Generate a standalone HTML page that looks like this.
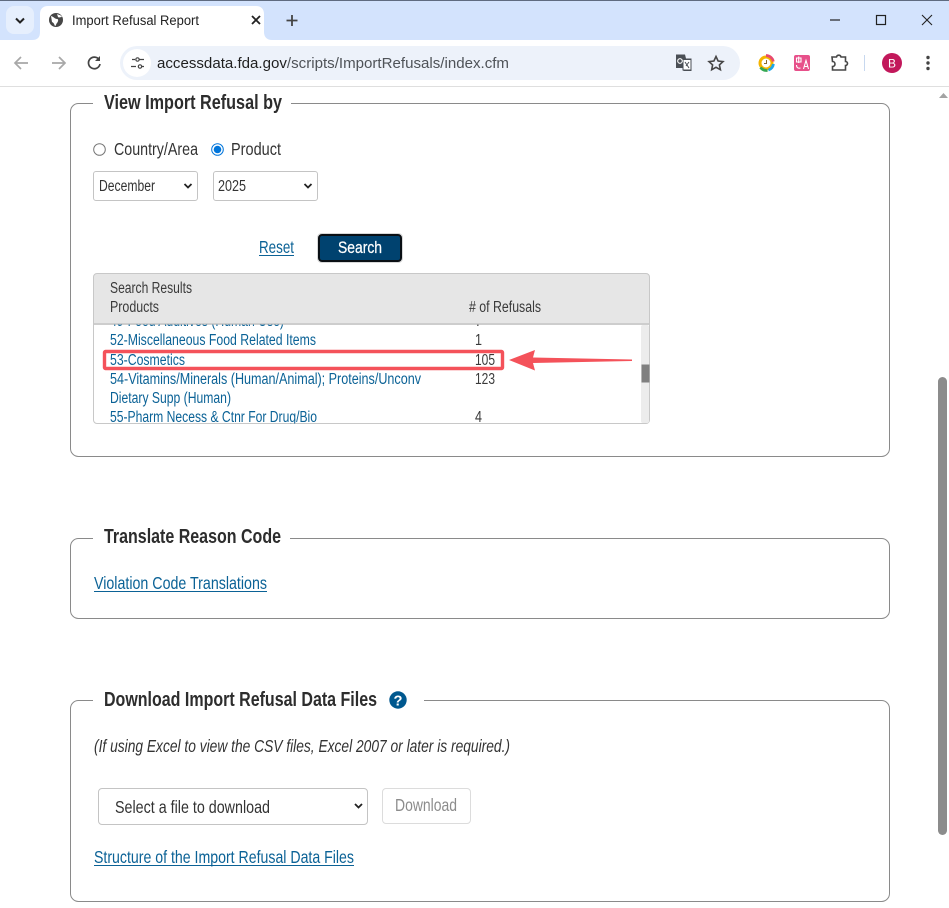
<!DOCTYPE html>
<html lang="en"><head><meta charset="utf-8"><title>Import Refusal Report</title>
<style>
html,body{margin:0;padding:0;background:#fff;width:949px;height:908px;overflow:hidden}
svg{display:block}
text{font-family:"Liberation Sans",sans-serif;fill:#333;font-size:17.500px}
.l{fill:#0b6296}
.h{font-weight:700;font-size:20px;fill:#2d2d2d}
.r{font-size:15.300px;fill:#0b6296}
.n{font-size:15.300px;fill:#3a3a3a}
.f{fill:none;stroke:#8a8a8a;stroke-width:1}
.ic{fill:none;stroke:#474747;stroke-width:1.6}
</style></head><body>
<svg width="949" height="908" viewBox="0 0 949 908" xmlns="http://www.w3.org/2000/svg">
<!-- browser chrome -->
<rect width="949" height="40" fill="#d3e3fd"/>
<rect width="949" height="1" fill="#5f6b80"/>
<rect x="6" y="6" width="28" height="28" rx="8" fill="#e6effd"/>
<path d="M16 18.500l4 4 4-4" fill="none" stroke="#222" stroke-width="2"/>
<path d="M32 40c6 0 8-3 8-8V14c0-5 3-8 8-8h208c5 0 8 3 8 8v18c0 5 3 8 8 8z" fill="#fff"/>
<circle cx="56" cy="20" r="7" fill="#474747"/>
<path d="M51 16c3 1 4 3 6 3s1 3 0 4-1 3-2 3c-1-2-1-3-3-4zM57 14c2 1 4 1 5 3-2 0-3 1-4 0z" fill="#fff"/>
<text x="72" y="25" textLength="127" lengthAdjust="spacingAndGlyphs" style="font-size:13.500px;fill:#222">Import Refusal Report</text>
<path d="M252 16l8 8M260 16l-8 8" stroke="#222" stroke-width="1.800"/>
<path d="M292 15v11M286.500 20.500h11" stroke="#444" stroke-width="1.800"/>
<path d="M830 20h10" stroke="#222" stroke-width="1.200"/>
<rect x="876.500" y="15.500" width="9" height="9" fill="none" stroke="#222" stroke-width="1.200"/>
<path d="M922 15l10 10M932 15l-10 10" stroke="#222" stroke-width="1.100"/>
<rect y="40" width="949" height="46" fill="#fff"/>
<rect y="86" width="949" height="1" fill="#dfdfdf"/>
<!-- toolbar -->
<path d="M28 63H16M21 57l-6 6 6 6" fill="none" stroke="#a8a8a8" stroke-width="1.700"/>
<path d="M52 63h12M59 57l6 6-6 6" fill="none" stroke="#a8a8a8" stroke-width="1.700"/>
<path d="M99 59.500a5.800 5.800 0 1 0 1 4.500" fill="none" stroke="#444" stroke-width="1.700"/>
<path d="M100 56v5h-5z" fill="#444"/>
<rect x="120" y="46" width="620" height="34" rx="17" fill="#edf2fa"/>
<circle cx="137" cy="63" r="14" fill="#fff"/>
<path d="M132 59.500h3M139 59.500h5M131 66.500h5M142 66.500h2" stroke="#444" stroke-width="1.300"/>
<circle cx="137.500" cy="59.500" r="1.700" fill="none" stroke="#444" stroke-width="1.200"/>
<circle cx="140" cy="66.500" r="1.700" fill="none" stroke="#444" stroke-width="1.200"/>
<text x="157" y="68" textLength="352" lengthAdjust="spacingAndGlyphs" style="font-size:15px;fill:#4f5358"><tspan style="fill:#1f1f1f">accessdata.fda.gov</tspan>/scripts/ImportRefusals/index.cfm</text>
<!-- translate icon -->
<path d="M676 54.500h9l1 4h5.500v12.500h-8l-1-3H676z" fill="#4a4f55"/>
<rect x="683" y="59.500" width="8" height="10.500" fill="#fff" stroke="#4a4f55"/>
<path d="M685 62l4 6M689 62l-3 4" stroke="#4a4f55" stroke-width="1" fill="none"/>
<circle cx="680" cy="61" r="2.300" fill="none" stroke="#fff" stroke-width="1.100"/>
<path d="M716 56.500l2.100 4.500 4.900.6-3.600 3.300 1 4.800-4.400-2.400-4.300 2.400.9-4.800-3.600-3.300 4.900-.6z" class="ic"/>
<!-- colour ring -->
<circle cx="766" cy="63" r="6" fill="#fff" stroke="#f4b400" stroke-width="3"/>
<path d="M766 55.500a7.500 7.500 0 0 1 7.300 6" fill="none" stroke="#e84a6f" stroke-width="2.800"/>
<path d="M773.400 64a7.500 7.500 0 0 1-5 6.100" fill="none" stroke="#1ea7e8" stroke-width="2.800"/>
<path d="M767.500 70.400a7.500 7.500 0 0 1-7-3" fill="none" stroke="#34a853" stroke-width="2.800"/>
<path d="M766.500 60v3.500h-2.500" fill="none" stroke="#8a6a30" stroke-width="1"/>
<!-- pink translate -->
<rect x="794" y="55" width="16" height="16" rx="2" fill="#e7508a"/>
<path d="M796.500 58h4.500v4h-4.500zM798.700 56.500v6.500M796.500 65c0 3 2 3.500 4 3M803.500 69l2.500-8.500 2.500 8.500M804.300 66.500h3.400" fill="none" stroke="#fff" stroke-width="1.100"/>
<!-- puzzle -->
<path d="M832 57h4.500a2.300 2.300 0 0 1 4.500 0h4.500v4.500a2 2 0 0 1 0 4V70H832.500v-3.500a2.500 2.500 0 0 0 0-5z" class="ic"/>
<rect x="864" y="55" width="1" height="16" fill="#c7d8ef"/>
<circle cx="892" cy="63" r="10" fill="#c2185b"/>
<text x="888" y="67.500" textLength="8" lengthAdjust="spacingAndGlyphs" style="font-size:12px;fill:#fff">B</text>
<circle cx="928" cy="57.500" r="1.700" fill="#444"/><circle cx="928" cy="63" r="1.700" fill="#444"/><circle cx="928" cy="68.500" r="1.700" fill="#444"/>
<!-- page scrollbar -->
<path d="M939 98l4.500-5 4.500 5z" fill="#a3a3a3"/>
<rect x="938" y="377" width="9" height="458" rx="4.500" fill="#8c8c8c"/>

<!-- fieldset 1 -->
<path class="f" d="M93 103.500H78.500a8 8 0 0 0-8 8v337a8 8 0 0 0 8 8h803a8 8 0 0 0 8-8v-337a8 8 0 0 0-8-8H291"/>
<text class="h" x="104" y="109" textLength="178" lengthAdjust="spacingAndGlyphs">View Import Refusal by</text>
<circle cx="99.500" cy="149.500" r="5.800" fill="#fff" stroke="#767676" stroke-width="1"/>
<text x="114" y="155" textLength="84" lengthAdjust="spacingAndGlyphs">Country/Area</text>
<circle cx="217.500" cy="149.500" r="5.800" fill="#fff" stroke="#0075db" stroke-width="1"/>
<circle cx="217.500" cy="149.500" r="3.800" fill="#0075db"/>
<text x="231" y="155" textLength="50" lengthAdjust="spacingAndGlyphs">Product</text>
<rect x="93.500" y="171.500" width="104" height="29" rx="2.500" fill="#fff" stroke="#c4c4c4"/>
<text x="99" y="191" textLength="56" lengthAdjust="spacingAndGlyphs" style="font-size:15.300px">December</text>
<path d="M184.500 184l3.500 3.500 3.500-3.500" fill="none" stroke="#222" stroke-width="1.800"/>
<rect x="213.500" y="171.500" width="104" height="29" rx="2.500" fill="#fff" stroke="#c4c4c4"/>
<text x="218" y="191" textLength="28" lengthAdjust="spacingAndGlyphs" style="font-size:15.300px">2025</text>
<path d="M304.500 184l3.500 3.500 3.500-3.500" fill="none" stroke="#222" stroke-width="1.800"/>
<text class="l" x="259" y="253" textLength="35" lengthAdjust="spacingAndGlyphs">Reset</text>
<rect x="259" y="255" width="35" height="1" fill="#0b6296"/>
<rect x="317.500" y="233.500" width="85" height="29" rx="4" fill="#fff" stroke="#d8d8d8"/>
<rect x="319" y="235" width="82" height="26" rx="3" fill="#00426f" stroke="#0a0f14" stroke-width="2"/>
<text x="338" y="253" textLength="44" lengthAdjust="spacingAndGlyphs" style="fill:#fff;stroke:#fff;stroke-width:.25px;font-size:17px">Search</text>

<!-- results table -->
<defs><clipPath id="c"><rect x="94" y="324.500" width="555" height="99"/></clipPath></defs>
<path d="M93.500 323V277a3.500 3.500 0 0 1 3.500-3.500h549.500a3.500 3.500 0 0 1 3.500 3.500v46z" fill="#e6e6e6"/>
<rect x="94" y="323" width="556" height="2" fill="#cdcdcd"/>
<rect x="93.500" y="273.500" width="556" height="150" rx="3.500" fill="none" stroke="#c8c8c8"/>
<text class="n" x="110" y="293" textLength="82" lengthAdjust="spacingAndGlyphs">Search Results</text>
<text class="n" x="110" y="312" textLength="49" lengthAdjust="spacingAndGlyphs">Products</text>
<text class="n" x="469" y="312" textLength="72" lengthAdjust="spacingAndGlyphs"># of Refusals</text>
<g clip-path="url(#c)">
<text class="r" x="110" y="326" textLength="174" lengthAdjust="spacingAndGlyphs">49-Food Additives (Human Use)</text>
<text class="n" x="475" y="326" textLength="7" lengthAdjust="spacingAndGlyphs">7</text>
<text class="r" x="110" y="345" textLength="206" lengthAdjust="spacingAndGlyphs">52-Miscellaneous Food Related Items</text>
<text class="n" x="475" y="345" textLength="7" lengthAdjust="spacingAndGlyphs">1</text>
<text class="r" x="110" y="365" textLength="75" lengthAdjust="spacingAndGlyphs">53-Cosmetics</text>
<text class="n" x="475" y="365" textLength="20" lengthAdjust="spacingAndGlyphs">105</text>
<text class="r" x="110" y="384" textLength="311" lengthAdjust="spacingAndGlyphs">54-Vitamins/Minerals (Human/Animal); Proteins/Unconv</text>
<text class="n" x="475" y="384" textLength="20" lengthAdjust="spacingAndGlyphs">123</text>
<text class="r" x="110" y="403" textLength="121" lengthAdjust="spacingAndGlyphs">Dietary Supp (Human)</text>
<text class="r" x="110" y="422" textLength="207" lengthAdjust="spacingAndGlyphs">55-Pharm Necess &amp; Ctnr For Drug/Bio</text>
<text class="n" x="475" y="422" textLength="7" lengthAdjust="spacingAndGlyphs">4</text>
</g>
<rect x="641" y="325" width="8" height="98" rx="2" fill="#ececec"/>
<rect x="641.500" y="364.500" width="8" height="18" fill="#808080"/>
<!-- annotation -->
<rect x="104.500" y="351.500" width="398" height="17" rx="1" fill="none" stroke="#f4525a" stroke-width="3.400"/>
<path d="M509 360l26-10-2 7.500 99 2v1.500l-99 2 2 7.500z" fill="#f4525a"/>

<!-- fieldset 2 -->
<path class="f" d="M93 538.500H78.500a8 8 0 0 0-8 8v64a8 8 0 0 0 8 8h803a8 8 0 0 0 8-8v-64a8 8 0 0 0-8-8H290"/>
<text class="h" x="104" y="543" textLength="177" lengthAdjust="spacingAndGlyphs">Translate Reason Code</text>
<text class="l" x="94" y="589" textLength="173" lengthAdjust="spacingAndGlyphs">Violation Code Translations</text>
<rect x="94" y="591" width="173" height="1" fill="#0b6296"/>

<!-- fieldset 3 -->
<path class="f" d="M93 700.500H78.500a8 8 0 0 0-8 8v185a8 8 0 0 0 8 8h803a8 8 0 0 0 8-8v-185a8 8 0 0 0-8-8H424"/>
<text class="h" x="104" y="706" textLength="273" lengthAdjust="spacingAndGlyphs">Download Import Refusal Data Files</text>
<circle cx="398" cy="700" r="8.700" fill="#00588f"/>
<text x="393.500" y="705.500" textLength="9" lengthAdjust="spacingAndGlyphs" style="font-size:15px;font-weight:700;fill:#fff">?</text>
<text x="94" y="752" textLength="416" lengthAdjust="spacingAndGlyphs" style="font-style:italic">(If using Excel to view the CSV files, Excel 2007 or later is required.)</text>
<rect x="98.500" y="788.500" width="269" height="36" rx="3.500" fill="#fff" stroke="#c4c4c4"/>
<text x="115" y="813" textLength="155" lengthAdjust="spacingAndGlyphs">Select a file to download</text>
<path d="M355 804l3.500 3.500 3.500-3.500" fill="none" stroke="#222" stroke-width="1.800"/>
<rect x="382.500" y="788.500" width="88" height="35" rx="3.500" fill="#fff" stroke="#dcdcdc"/>
<text x="395" y="811" textLength="62" lengthAdjust="spacingAndGlyphs" style="fill:#8c8c8c">Download</text>
<text class="l" x="94" y="863" textLength="260" lengthAdjust="spacingAndGlyphs">Structure of the Import Refusal Data Files</text>
<rect x="94" y="865" width="260" height="1" fill="#0b6296"/>
</svg>
</body></html>
